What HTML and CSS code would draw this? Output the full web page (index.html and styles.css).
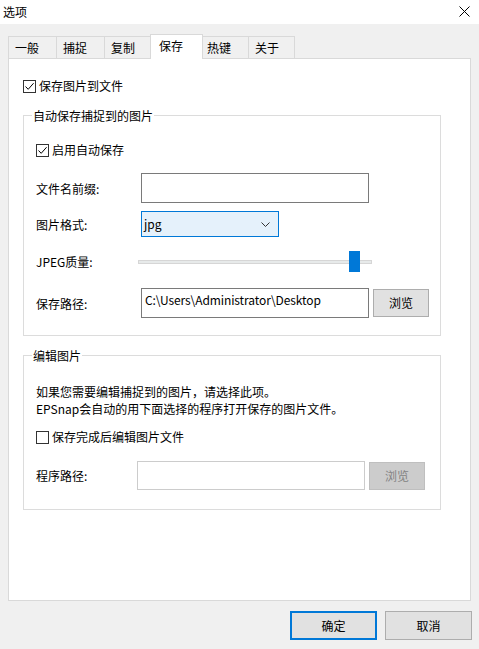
FILE: index.html
```html
<!DOCTYPE html>
<html lang="zh-CN">
<head>
<meta charset="utf-8">
<title>选项</title>
<link rel="stylesheet" href="styles.css">
</head>
<body>
<div class="window">
  <div class="titlebar">
    <span class="title">选项</span>
    <svg class="close" width="11" height="11" viewBox="0 0 11 11"><path d="M0.5 0.5L10.5 10.5M10.5 0.5L0.5 10.5" stroke="#000" stroke-width="1" fill="none"/></svg>
  </div>

  <div class="tabs">
    <div class="tab">一般</div>
    <div class="tab">捕捉</div>
    <div class="tab">复制</div>
    <div class="tab tab-active">保存</div>
    <div class="tab">热键</div>
    <div class="tab tab-last">关于</div>
  </div>

  <div class="panel">
    <label class="check check-top">
      <span class="box"><svg width="11" height="11" viewBox="0 0 11 11"><path d="M1.5 5.5L4.2 8.3L9.6 2.2" stroke="#000" stroke-width="1" fill="none"/></svg></span>
      <span>保存图片到文件</span>
    </label>

    <div class="group group-auto">
      <div class="legend">自动保存捕捉到的图片</div>
      <label class="check check-auto">
        <span class="box"><svg width="11" height="11" viewBox="0 0 11 11"><path d="M1.5 5.5L4.2 8.3L9.6 2.2" stroke="#000" stroke-width="1" fill="none"/></svg></span>
        <span>启用自动保存</span>
      </label>
      <div class="row row-prefix">
        <span class="label">文件名前缀:</span>
        <div class="input input-prefix"></div>
      </div>
      <div class="row row-format">
        <span class="label">图片格式:</span>
        <div class="select">
          <span>jpg</span>
          <svg width="9" height="5" viewBox="0 0 9 5"><path d="M0.5 0.5L4.5 4.5L8.5 0.5" stroke="#333" stroke-width="1" fill="none"/></svg>
        </div>
      </div>
      <div class="row row-quality">
        <span class="label label-short">JPEG质量:</span>
        <div class="slider">
          <div class="track"></div>
          <div class="thumb" style="left: 211px"></div>
        </div>
      </div>
      <div class="row row-path">
        <span class="label">保存路径:</span>
        <div class="input input-path">C:\Users\Administrator\Desktop</div>
        <button class="btn btn-browse">浏览</button>
      </div>
    </div>

    <div class="group group-edit">
      <div class="legend">编辑图片</div>
      <p class="desc">如果您需要编辑捕捉到的图片，请选择此项。<br>EPSnap会自动的用下面选择的程序打开保存的图片文件。</p>
      <label class="check check-edit">
        <span class="box"></span>
        <span>保存完成后编辑图片文件</span>
      </label>
      <div class="row row-program">
        <span class="label label-program">程序路径:</span>
        <div class="input input-disabled"></div>
        <button class="btn btn-disabled">浏览</button>
      </div>
    </div>
  </div>

  <div class="actions">
    <button class="btn btn-dialog btn-default">确定</button>
    <button class="btn btn-dialog">取消</button>
  </div>
</div>
</body>
</html>
```

FILE: styles.css
```css
* {
  box-sizing: border-box;
}

html, body {
  margin: 0;
  padding: 0;
}

body {
  width: 479px;
  height: 649px;
  background: #f0f0f0;
  font-family: "Noto Sans CJK SC", "Noto Sans", sans-serif;
  font-size: 12px;
  color: #000;
  overflow: hidden;
}

.window {
  display: flex;
  flex-direction: column;
}

.titlebar {
  height: 24px;
  background: #fff;
  display: flex;
  align-items: center;
  justify-content: space-between;
  padding: 0 9px 0 3px;
}

.title {
  line-height: 16px;
  margin-top: -1px;
}

.close {
  display: block;
  margin-top: -1px;
}

.tabs {
  display: flex;
  align-items: flex-start;
  height: 22px;
  margin: 12px 0 0 8px;
}

.tab {
  width: 49px;
  height: 22px;
  margin-right: -1px;
  border: 1px solid #d9d9d9;
  border-bottom: none;
  background: #f0f0f0;
  padding-left: 6px;
  line-height: 21px;
}

.tab-last {
  width: 47px;
}

.tab-active {
  position: relative;
  z-index: 1;
  width: 53px;
  height: 25px;
  margin: -2px -3px 0 -2px;
  background: #fff;
  padding-left: 8px;
  line-height: 22px;
}

.panel {
  margin: 0 0 0 8px;
  width: 463px;
  height: 543px;
  background: #fff;
  border: 1px solid #d9d9d9;
  display: flex;
  flex-direction: column;
  align-items: flex-start;
}

.check {
  display: flex;
  align-items: center;
  height: 16px;
  line-height: 16px;
  gap: 3px;
}

.box {
  width: 13px;
  height: 13px;
  border: 1px solid #333;
  background: #fff;
  display: flex;
  align-items: center;
  justify-content: center;
}

.box svg {
  display: block;
}

.check-top {
  margin: 19px 0 0 14px;
}

.group {
  margin-left: 14px;
  width: 418px;
  border: 1px solid #dcdcdc;
  padding: 0 0 0 12px;
  display: flex;
  flex-direction: column;
  align-items: flex-start;
}

.group-auto {
  margin-top: 21px;
  height: 221px;
}

.group-edit {
  margin-top: 19px;
  height: 155px;
}

.legend {
  margin: -8px 0 0 -4px;
  padding: 0 1px;
  background: #fff;
  line-height: 16px;
  height: 16px;
}

.check-auto {
  margin-top: 18px;
}

.row {
  display: flex;
  align-items: center;
}

.label {
  width: 105px;
  flex: none;
}

.label-short {
  width: 102px;
}

.label-program {
  width: 101px;
}

.row-prefix {
  margin-top: 15px;
  height: 30px;
}

.row-format {
  margin-top: 8px;
  height: 26px;
}

.row-quality {
  margin-top: 14px;
  height: 21px;
}

.row-path {
  margin-top: 16px;
  height: 30px;
}

.input {
  width: 228px;
  height: 30px;
  border: 1px solid #7a7a7a;
  background: #fff;
}

.input-prefix {
  height: 30px;
}

.input-path {
  padding: 3px 0 0 3px;
  line-height: 16px;
  white-space: nowrap;
  letter-spacing: -0.1px;
}

.select {
  width: 138px;
  height: 26px;
  border: 1px solid #0078d7;
  background: #e5f1fb;
  display: flex;
  align-items: center;
  justify-content: space-between;
  padding: 0 8px 0 2px;
}

.select span {
  line-height: 16px;
}

.select svg {
  display: block;
}

.slider {
  position: relative;
  width: 234px;
  height: 21px;
  margin-left: 0;
}

.track {
  margin-top: 9px;
  height: 4px;
  background: #e7eaea;
  border: 1px solid #d6d6d6;
}

.thumb {
  position: absolute;
  top: 0;
  width: 11px;
  height: 21px;
  background: #0078d7;
}

.btn {
  font-family: inherit;
  font-size: 12px;
  color: #000;
  background: #e1e1e1;
  border: 1px solid #adadad;
  padding: 0;
  margin: 0;
  line-height: 16px;
}

.btn-browse {
  width: 56px;
  height: 28px;
  margin-left: 4px;
}

.desc {
  margin: 19px 0 0 0;
  line-height: 17px;
}

.check-edit {
  margin-top: 12px;
}

.row-program {
  margin-top: 16px;
  height: 29px;
}

.input-disabled {
  height: 29px;
  border-color: #cccccc;
}

.btn-disabled {
  width: 56px;
  height: 28px;
  margin-left: 4px;
  background: #cccccc;
  border-color: #bfbfbf;
  color: #838383;
}

.actions {
  display: flex;
  justify-content: flex-end;
  gap: 8px;
  margin: 10px 7px 0 0;
}

.btn-dialog {
  width: 87px;
  height: 29px;
}

.btn-default {
  border: 2px solid #0078d7;
}
```
